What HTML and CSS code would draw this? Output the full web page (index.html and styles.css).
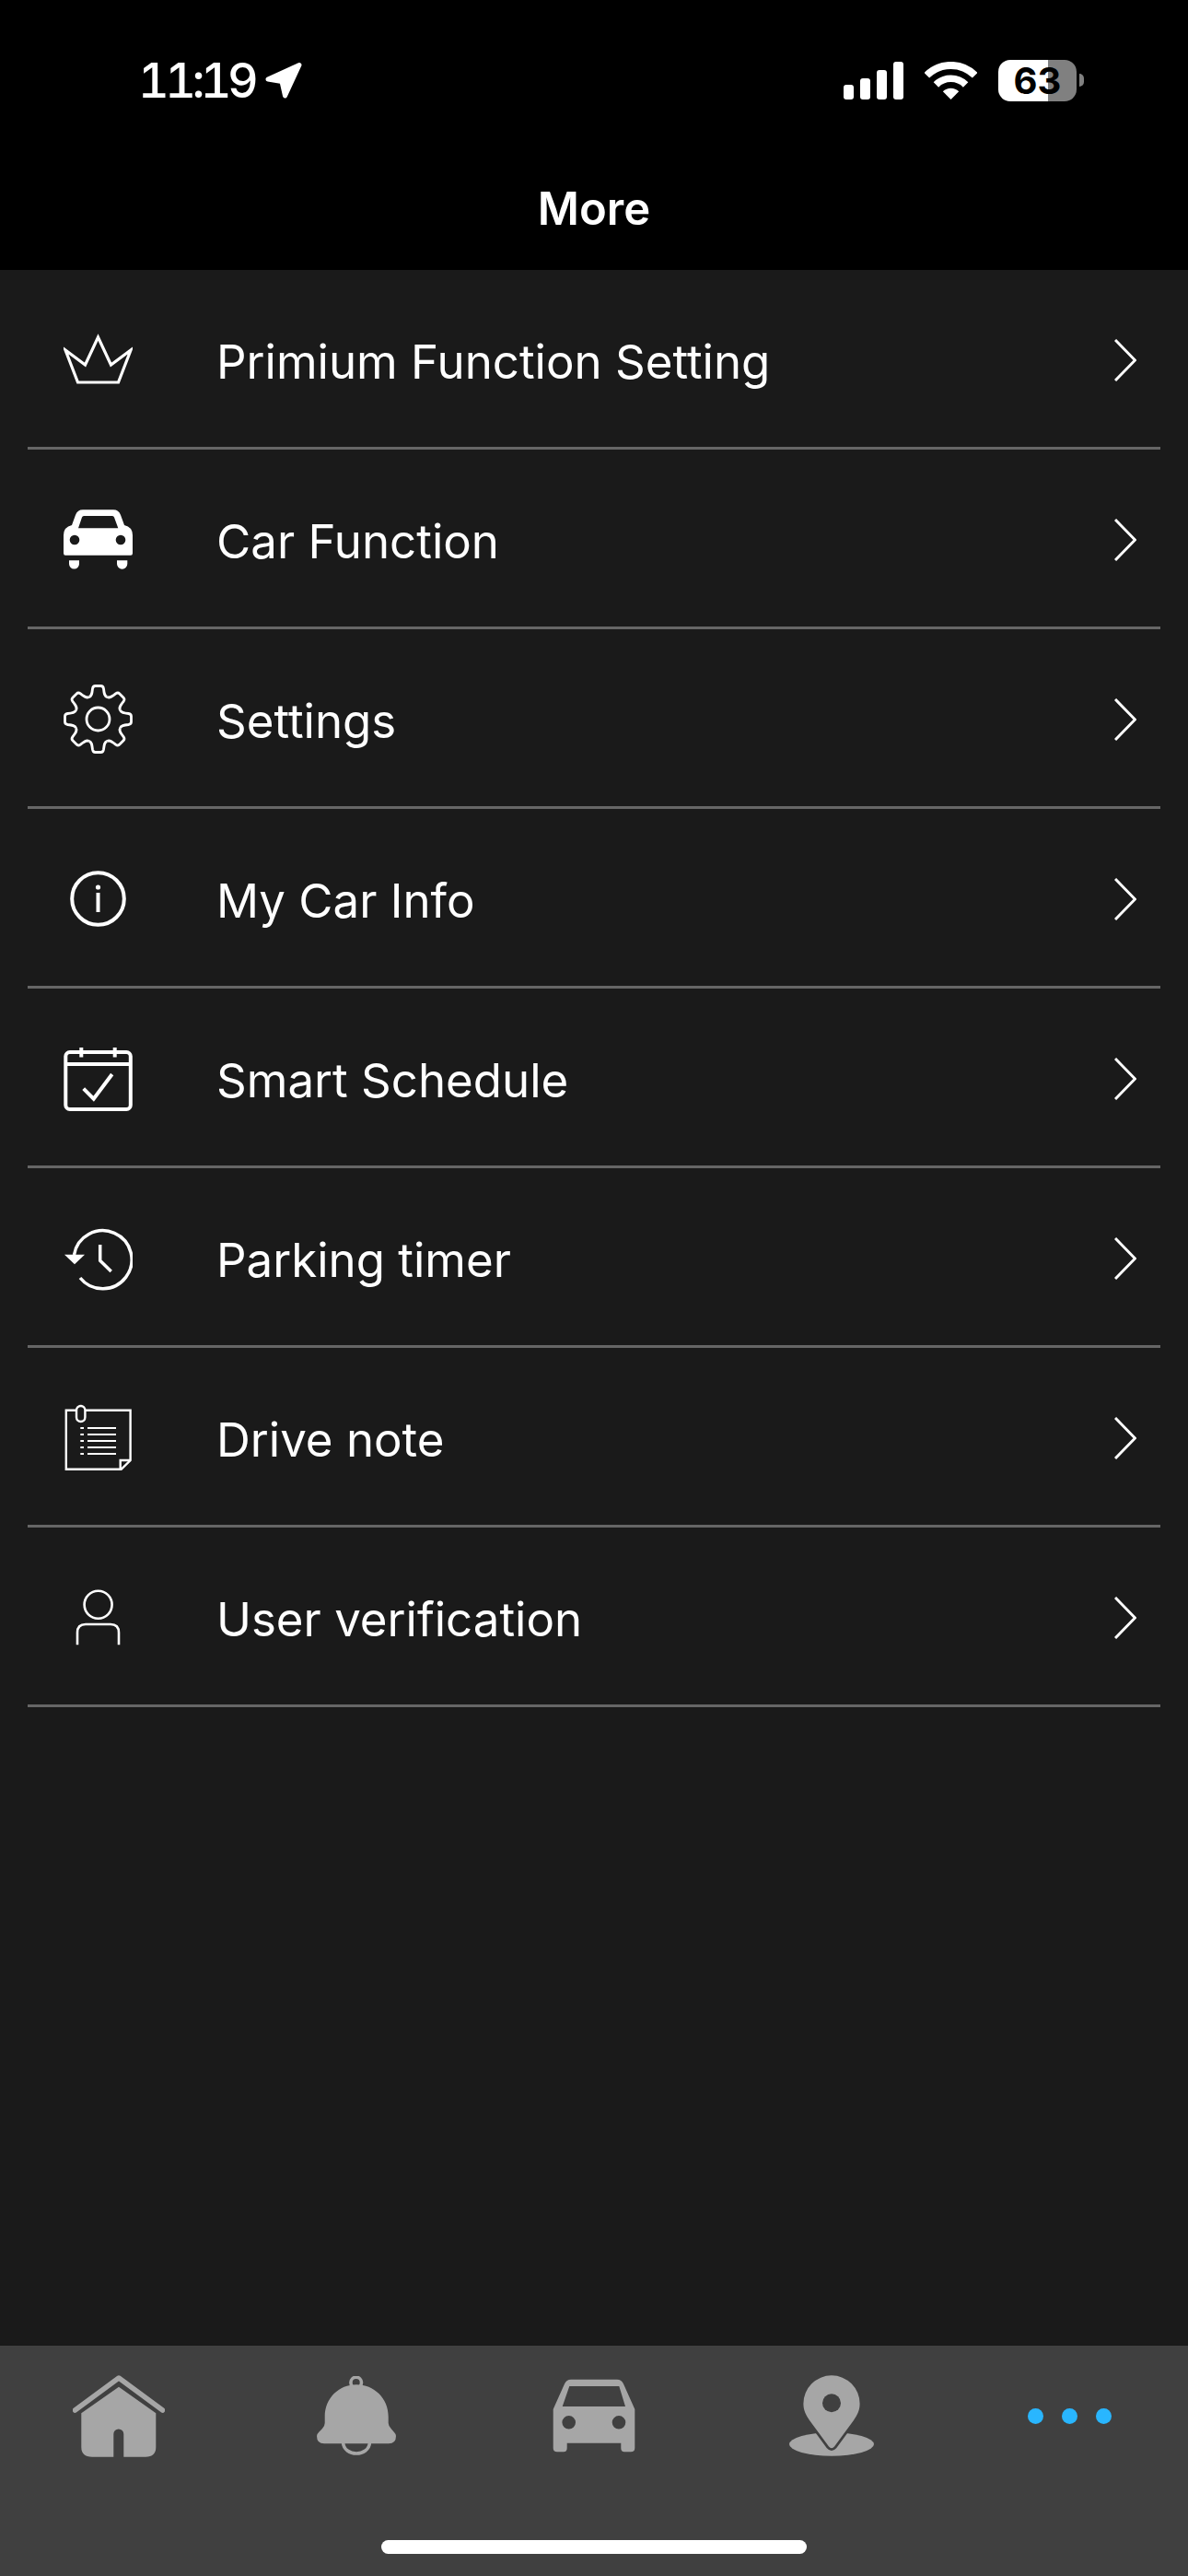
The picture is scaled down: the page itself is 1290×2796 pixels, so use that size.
FILE: index.html
```html
<!DOCTYPE html>
<html lang="en">
<head>
    <meta charset="UTF-8">
    <title>More</title>
    <link rel="stylesheet" href="styles.css">
</head>
<body>

<header>
    <div class="status">
        <div class="status-left">
            <span class="time">11:19</span>
            <svg class="loc" width="42" height="40" viewBox="0 0 42 40"><path d="M4 19 L38 3.5 L22.5 37 L19 21.5Z" fill="#fff" stroke="#fff" stroke-width="5" stroke-linejoin="round"/></svg>
        </div>
        <div class="status-right">
            <svg width="65" height="41" viewBox="0 0 65 41" fill="#fff">
                <rect x="0" y="25" width="11" height="16" rx="3"/>
                <rect x="18" y="18" width="11" height="23" rx="3"/>
                <rect x="36" y="9" width="11" height="32" rx="3"/>
                <rect x="54" y="0" width="11" height="41" rx="3"/>
            </svg>
            <svg class="wifi" width="57" height="41" viewBox="0 0 57 41" fill="none" stroke="#fff">
                <path d="M2.3 14.8 A37 37 0 0 1 54.7 14.8" stroke-width="8"/>
                <path d="M12.4 24.9 A22.8 22.8 0 0 1 44.6 24.9" stroke-width="7.7"/>
                <path d="M28.5 41 L19.8 32.3 A12.3 12.3 0 0 1 37.2 32.3Z" fill="#fff" stroke="none"/>
            </svg>
            <div class="battery"><span>63</span></div>
            <div class="battery-nub"></div>
        </div>
    </div>
    <h1>More</h1>
</header>

<main>
    <a class="row" href="#">
        <svg class="row-icon" viewBox="0 0 75 75"><path class="ln" d="M2 27 L15.5 62 H59.5 L73 27 L51.5 43 L37.5 13 L23.5 43Z" stroke-width="3.2"/></svg>
        <span class="label">Primium Function Setting</span>
        <svg class="chev" viewBox="0 0 24 46"><path class="ln" d="M1 1 L22.5 23 L1 45" stroke-width="3" stroke-linejoin="miter"/></svg>
    </a>
    <a class="row" href="#">
        <svg class="row-icon" viewBox="0 0 75 75" fill="#fff">
            <path fill-rule="evenodd" d="M21 5.3 H54 Q60 5.3 62 11 L66 22 Q75 24 75 33 V52.5 Q75 54.7 73 54.7 H2 Q0 54.7 0 52.5 V33 Q0 24 9 22 L13 11 Q15 5.3 21 5.3Z M22 12 Q20.5 12 20 13.5 L16 25.3 H59.3 L55 13.5 Q54.5 12 53 12Z M12 32.7 A5.3 5.3 0 1 0 12 43.3 A5.3 5.3 0 1 0 12 32.7Z M62 32.7 A5.3 5.3 0 1 0 62 43.3 A5.3 5.3 0 1 0 62 32.7Z"/>
            <path d="M6 60.3 H17 V64 A5.5 5.5 0 0 1 6 64Z M58 60.3 H69.3 V64 A5.6 5.6 0 0 1 58 64Z"/>
        </svg>
        <span class="label">Car Function</span>
        <svg class="chev" viewBox="0 0 24 46"><path class="ln" d="M1 1 L22.5 23 L1 45" stroke-width="3" stroke-linejoin="miter"/></svg>
    </a>
    <a class="row" href="#">
        <svg class="row-icon" viewBox="0 0 75 75">
            <defs><path id="tooth" d="M-10 -24 C-7 -24.5 -6.5 -28 -6 -33 Q-5.5 -36 -3 -36 H3 Q5.5 -36 6 -33 C6.5 -28 7 -24.5 10 -24"/></defs>
            <g class="ln" stroke-width="2.8" transform="translate(37.5 37.5)">
                <use href="#tooth"/>
                <use href="#tooth" transform="rotate(45)"/>
                <use href="#tooth" transform="rotate(90)"/>
                <use href="#tooth" transform="rotate(135)"/>
                <use href="#tooth" transform="rotate(180)"/>
                <use href="#tooth" transform="rotate(225)"/>
                <use href="#tooth" transform="rotate(270)"/>
                <use href="#tooth" transform="rotate(315)"/>
                <circle r="12.5"/>
            </g>
        </svg>
        <span class="label">Settings</span>
        <svg class="chev" viewBox="0 0 24 46"><path class="ln" d="M1 1 L22.5 23 L1 45" stroke-width="3" stroke-linejoin="miter"/></svg>
    </a>
    <a class="row" href="#">
        <svg class="row-icon" viewBox="0 0 75 75">
            <circle class="ln" cx="37.5" cy="37.5" r="28.3" stroke-width="4"/>
            <circle cx="37.5" cy="25" r="2.6" fill="#fff"/>
            <path class="ln" d="M37.5 31 V52" stroke-width="4"/>
        </svg>
        <span class="label">My Car Info</span>
        <svg class="chev" viewBox="0 0 24 46"><path class="ln" d="M1 1 L22.5 23 L1 45" stroke-width="3" stroke-linejoin="miter"/></svg>
    </a>
    <a class="row" href="#">
        <svg class="row-icon" viewBox="0 0 75 75">
            <g class="ln" stroke-width="4">
                <rect x="2.3" y="9" width="70.5" height="62" rx="4.5"/>
                <path d="M2.3 22 H72.8 M19.3 4 V14.5 M55.7 4 V14.5"/>
                <path d="M21.7 48.7 L32.7 59.7 L52.7 33"/>
            </g>
        </svg>
        <span class="label">Smart Schedule</span>
        <svg class="chev" viewBox="0 0 24 46"><path class="ln" d="M1 1 L22.5 23 L1 45" stroke-width="3" stroke-linejoin="miter"/></svg>
    </a>
    <a class="row" href="#">
        <svg class="row-icon" viewBox="0 0 75 75">
            <path class="ln" stroke-width="3.5" d="M11.5 34 A31.5 31.5 0 1 1 18 59"/>
            <path d="M1 33.7 H23 L12 44.3Z" fill="#fff"/>
            <path class="ln" stroke-width="3.5" d="M39.7 23 V40.3 L51.7 52"/>
        </svg>
        <span class="label">Parking timer</span>
        <svg class="chev" viewBox="0 0 24 46"><path class="ln" d="M1 1 L22.5 23 L1 45" stroke-width="3" stroke-linejoin="miter"/></svg>
    </a>
    <a class="row" href="#">
        <svg class="row-icon" viewBox="0 0 75 75">
            <g class="ln" stroke-width="2.4">
                <path d="M2.8 7.8 H72.6 V62 L62.6 71.8 H2.8Z"/>
                <path d="M72.6 62 H61.7 V71"/>
                <rect class="clip" x="14" y="3" width="9.4" height="17" rx="4.7"/>
                <path d="M26 27 H57 M26 34 H57 M26 41 H57 M26 48 H57 M26 55 H57 M18.3 27 H22 M18.3 34 H22 M18.3 41 H22 M18.3 48 H22 M18.3 55 H22" stroke-width="2"/>
            </g>
        </svg>
        <span class="label">Drive note</span>
        <svg class="chev" viewBox="0 0 24 46"><path class="ln" d="M1 1 L22.5 23 L1 45" stroke-width="3" stroke-linejoin="miter"/></svg>
    </a>
    <a class="row" href="#">
        <svg class="row-icon" viewBox="0 0 75 75">
            <g class="ln" stroke-width="2.6">
                <circle cx="37.6" cy="23.7" r="15"/>
                <path d="M15 67.3 V54 Q15 45 24 45 H51 Q60 45 60 54 V67.3"/>
            </g>
        </svg>
        <span class="label">User verification</span>
        <svg class="chev" viewBox="0 0 24 46"><path class="ln" d="M1 1 L22.5 23 L1 45" stroke-width="3" stroke-linejoin="miter"/></svg>
    </a>
</main>

<footer>
    <nav class="tabs">
        <a class="tab" href="#">
            <svg width="100" height="90" viewBox="0 0 100 90" fill="#a6a6a6">
                <path d="M2.5 39 L50 4 L97.5 39" fill="none" stroke="#a6a6a6" stroke-width="5.5" stroke-linecap="round" stroke-linejoin="round"/>
                <path d="M50 13.7 L90.3 42.3 V79 Q90.3 89.7 79 89.7 H55.3 V65 A5.5 5.5 0 0 0 44.3 65 V89.7 H21 Q9.3 89.7 9.3 79 V42.3Z"/>
            </svg>
        </a>
        <a class="tab" href="#">
            <svg width="86" height="86" viewBox="0 0 86 86" fill="#a6a6a6">
                <circle cx="42.7" cy="7" r="5.8" fill="none" stroke="#a6a6a6" stroke-width="3.6"/>
                <path d="M43 9.3 C62 9.3 77.7 24 77.7 44 V51 Q77.7 54 81 57.5 L84 61 Q86 63 86 65 Q86 73.3 78 73.3 H8 Q0 73.3 0 65 Q0 63 2.5 60.5 L6 57 Q8.7 54 8.7 51 V44 C8.7 24 24 9.3 43 9.3Z"/>
                <path d="M28.5 72 C29.5 88 56.5 88 57.5 72" fill="none" stroke="#a6a6a6" stroke-width="3.6"/>
            </svg>
        </a>
        <a class="tab" href="#">
            <svg width="90" height="80" viewBox="0 0 90 80" fill="#a6a6a6">
                <path fill-rule="evenodd" d="M20 0.7 H70 Q75 0.7 77 5.5 L89.3 33 V75 Q89.3 79.3 85 79.3 H78 Q74.3 79.3 74.3 75 V69.7 H15.7 V75 Q15.7 79.3 12 79.3 H5 Q0.7 79.3 0.7 75 V33 L13 5.5 Q15 0.7 20 0.7Z M18.3 8 L10.7 30 H79 L72.3 8Z M17.7 40 A7.3 7.3 0 1 0 17.7 54.6 A7.3 7.3 0 1 0 17.7 40Z M72 40 A7.3 7.3 0 1 0 72 54.6 A7.3 7.3 0 1 0 72 40Z"/>
            </svg>
        </a>
        <a class="tab" href="#">
            <svg width="92" height="88" viewBox="0 0 92 88" fill="#a6a6a6">
                <ellipse cx="46" cy="75" rx="46" ry="12.7"/>
                <path fill-rule="evenodd" stroke="#404040" stroke-width="5.5" paint-order="stroke" d="M46 0.3 A30.6 30.6 0 0 1 76.6 31 C76.6 38 74 43 70 49 L49 77.5 Q46 81 43 77.5 L22 49 C18 43 15.4 38 15.4 31 A30.6 30.6 0 0 1 46 0.3Z"/>
                <circle cx="46" cy="30.3" r="10" fill="#404040"/>
            </svg>
        </a>
        <a class="tab dots" href="#"><i></i><i></i><i></i></a>
    </nav>
    <div class="home-bar"></div>
</footer>

</body>
</html>
```

FILE: styles.css
```css
body {
    font-family: Inter, "Liberation Sans", sans-serif;
    margin: 0;
    padding: 0;
    height: 2796px;
    display: flex;
    flex-direction: column;
    background-color: #1a1a1a;
    color: white;
}

header {
    background-color: #000;
    height: 293px;
    flex: none;
}

.status {
    height: 174px;
    display: flex;
    align-items: center;
    justify-content: space-between;
    padding: 0 113px 0 150px;
}
.status-left, .status-right {
    display: flex;
    align-items: center;
}
.time {
    width: 137px;
    font-size: 52px;
    font-weight: 500;
    font-feature-settings: "tnum";
    letter-spacing: -4.5px;
}
.wifi {
    margin: 0 23px 0 23px;
}
.battery {
    width: 85px;
    height: 45px;
    border-radius: 13px;
    background: linear-gradient(90deg, #fff 54px, #808080 54px);
    display: flex;
    align-items: center;
    justify-content: center;
}
.battery span {
    color: #000;
    font-size: 40px;
    font-weight: 700;
}
.battery-nub {
    width: 5px;
    height: 14px;
    margin-left: 3px;
    border-radius: 0 5px 5px 0;
    background: #808080;
}

h1 {
    margin: 0;
    height: 106px;
    line-height: 106px;
    text-align: center;
    font-size: 49px;
    font-weight: 600;
}

main {
    flex: 1;
    padding: 0 30px;
}
.row {
    height: 189px;
    padding: 3px 26px 0 39px;
    border-bottom: 3px solid #666;
    display: flex;
    align-items: center;
    color: white;
    text-decoration: none;
}
.row-icon {
    width: 75px;
    height: 75px;
    flex: none;
}
.label {
    flex: 1;
    margin-left: 91px;
    padding-top: 3px;
    font-size: 51px;
}
.chev {
    width: 24px;
    height: 46px;
    flex: none;
}
.ln {
    fill: none;
    stroke: #fff;
}
.clip {
    fill: #1a1a1a;
}

footer {
    flex: none;
    height: 250px;
    background-color: #404040;
}
.tabs {
    height: 152px;
    display: grid;
    grid-template-columns: repeat(5, 1fr);
}
.tab {
    display: flex;
    align-items: center;
    justify-content: center;
}
.dots {
    gap: 20px;
}
.dots i {
    width: 17px;
    height: 17px;
    border-radius: 50%;
    background: #29b6ff;
}
.home-bar {
    width: 462px;
    height: 15px;
    margin: 59px auto 0;
    border-radius: 8px;
    background: #fff;
}
```
